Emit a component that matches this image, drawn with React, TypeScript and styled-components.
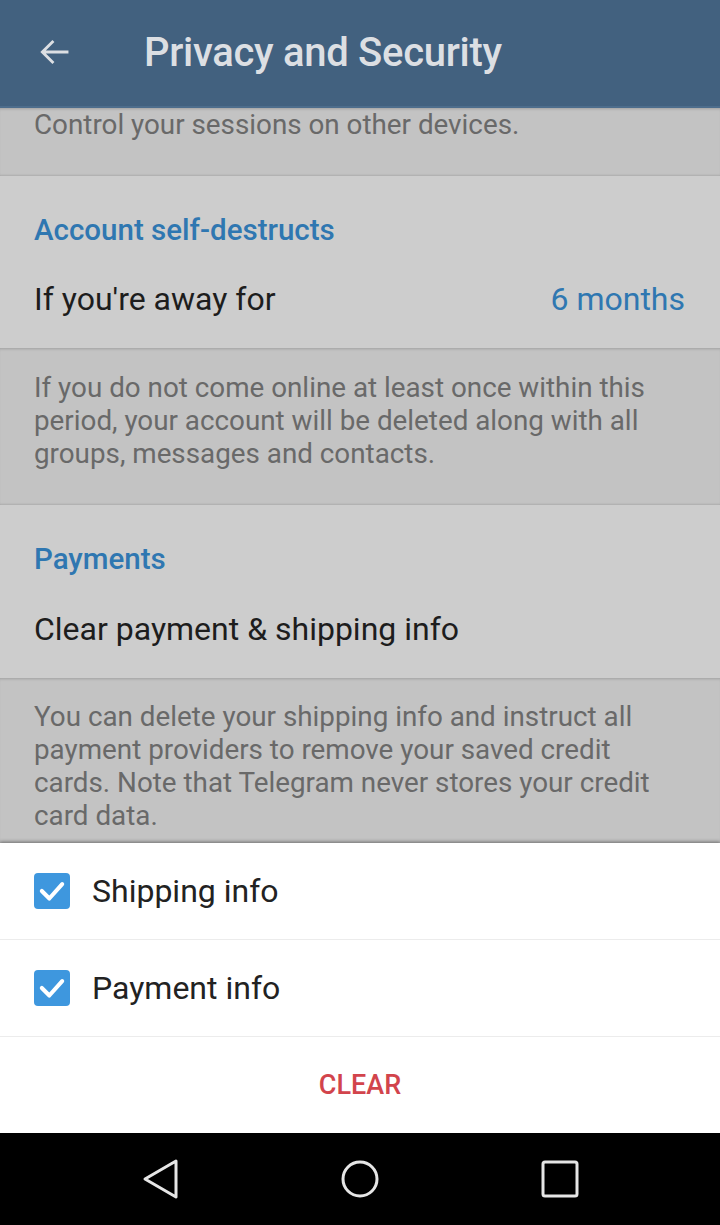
import React from 'react';
import styled, { createGlobalStyle } from 'styled-components';

const GlobalStyle = createGlobalStyle`
  html, body {
    margin: 0;
    padding: 0;
    background: #000;
  }
  body {
    font-family: Roboto, "Noto Sans", sans-serif;
  }
`;

const Screen = styled.div`
  width: 720px;
  height: 1225px;
  display: flex;
  flex-direction: column;
  overflow: hidden;
  background: #cdcdcd;
`;

const Header = styled.header`
  height: 108px;
  flex-shrink: 0;
  background: #42617f;
  border-bottom: 2px solid #4d6d8c;
  box-sizing: border-box;
  display: flex;
  align-items: center;
  padding-bottom: 2px;
  .back {
    width: 110px;
    display: flex;
    justify-content: center;
  }
  h1 {
    margin: 0;
    padding-left: 34px;
    font-size: 40px;
    font-weight: 500;
    color: #dcdfe3;
    letter-spacing: -0.3px;
  }
`;

const Info = styled.div<{ $pad: string; $h: number }>`
  height: ${(p) => p.$h}px;
  box-sizing: border-box;
  background: #c3c3c3;
  padding: ${(p) => p.$pad};
  font-size: 27.8px;
  line-height: 33px;
  color: #696969;
  box-shadow: inset 0 3px 3px -2px rgba(0, 0, 0, 0.18),
    inset 0 -2px 2px -1px rgba(0, 0, 0, 0.12);
  flex-shrink: 0;
  overflow: hidden;
`;

const Section = styled.div`
  background: #cdcdcd;
  flex-shrink: 0;
`;

const SectionTitle = styled.div`
  padding: 34px 34px 0;
  height: 74px;
  box-sizing: border-box;
  display: flex;
  align-items: center;
  font-size: 29.5px;
  font-weight: 500;
  color: #2f77b1;
`;

const Row = styled.div<{ $h: number }>`
  height: ${(p) => p.$h}px;
  padding: 0 35px 0 34px;
  box-sizing: border-box;
  display: flex;
  align-items: center;
  justify-content: space-between;
  font-size: 32px;
  color: #1d1d1d;
  .value {
    color: #2f77b1;
  }
`;

const Dialog = styled.div`
  background: #fff;
  flex-shrink: 0;
  box-shadow: 0 -2px 3px rgba(0, 0, 0, 0.25);
`;

const CheckRow = styled.div`
  height: 97px;
  box-sizing: border-box;
  display: flex;
  align-items: center;
  padding-left: 34px;
  gap: 22px;
  border-bottom: 1px solid #ececec;
  font-size: 32px;
  color: #222;
`;

const Box = styled.span`
  width: 36px;
  height: 36px;
  border-radius: 4px;
  background: #3e97de;
  display: flex;
  align-items: center;
  justify-content: center;
`;

const ClearButton = styled.div`
  height: 96px;
  display: flex;
  align-items: center;
  justify-content: center;
  font-size: 27px;
  font-weight: 500;
  color: #d2444c;
`;

const NavBar = styled.nav`
  flex: 1;
  background: #000;
  display: flex;
  align-items: center;
  justify-content: center;
  gap: 160px;
  svg {
    display: block;
  }
`;

const Check = () => (
  <Box>
    <svg width="30" height="30" viewBox="0 0 28 28">
      <path d="M4.5 14 L11.5 21 L23.5 7.5" fill="none" stroke="#fff" strokeWidth="3.8" strokeLinecap="round" strokeLinejoin="round" />
    </svg>
  </Box>
);

const App = () => {
  return (
    <>
      <GlobalStyle />
      <Screen>
        <Header>
          <div className="back">
            <svg width="38" height="38" viewBox="0 0 24 24">
              <path d="M20.5 12H4.5M11 5l-7 7 7 7" fill="none" stroke="#dcdfe3" strokeWidth="1.8" />
            </svg>
          </div>
          <h1>Privacy and Security</h1>
        </Header>

        <Info $h={68} $pad="0 34px">
          Control your sessions on other devices.
        </Info>

        <Section>
          <SectionTitle>Account self-destructs</SectionTitle>
          <Row $h={98}>
            <span>If you're away for</span>
            <span className="value">6 months</span>
          </Row>
        </Section>

        <Info $h={157} $pad="23px 34px 0">
          If you do not come online at least once within this period, your account will be
          deleted along with all groups, messages and contacts.
        </Info>

        <Section>
          <SectionTitle>Payments</SectionTitle>
          <Row $h={99}>
            <span>Clear payment &amp; shipping info</span>
          </Row>
        </Section>

        <Info $h={165} $pad="22px 34px 0">
          You can delete your shipping info and instruct all payment providers to remove your
          saved credit cards. Note that Telegram never stores your credit card data.
        </Info>

        <Dialog>
          <CheckRow>
            <Check />
            Shipping info
          </CheckRow>
          <CheckRow>
            <Check />
            Payment info
          </CheckRow>
          <ClearButton>CLEAR</ClearButton>
        </Dialog>

        <NavBar>
          <svg width="40" height="42" viewBox="0 0 40 42">
            <path d="M36 3 L5 21 L36 39 Z" fill="none" stroke="#e6e6e6" strokeWidth="3" strokeLinejoin="round" />
          </svg>
          <svg width="40" height="40" viewBox="0 0 40 40">
            <circle cx="20" cy="20" r="17" fill="none" stroke="#e6e6e6" strokeWidth="3" />
          </svg>
          <svg width="40" height="40" viewBox="0 0 40 40">
            <rect x="3" y="3" width="34" height="34" rx="2" fill="none" stroke="#e6e6e6" strokeWidth="3" />
          </svg>
        </NavBar>
      </Screen>
    </>
  );
};

export default App;
